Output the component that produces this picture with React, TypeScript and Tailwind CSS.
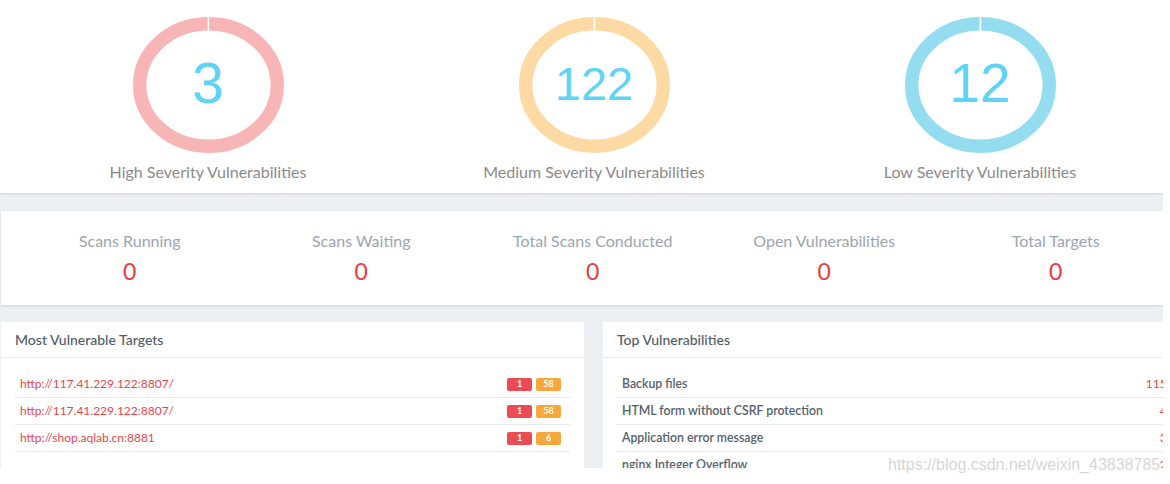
const severity = [
  { label: "High Severity Vulnerabilities", value: "3", ring: "#f8b5b5", size: "text-[57px]" },
  { label: "Medium Severity Vulnerabilities", value: "122", ring: "#fdd9a4", size: "text-[47px]" },
  { label: "Low Severity Vulnerabilities", value: "12", ring: "#94ddf1", size: "text-[55px]" },
];

const stats = ["Scans Running", "Scans Waiting", "Total Scans Conducted", "Open Vulnerabilities", "Total Targets"];

const targets = [
  { url: "http://117.41.229.122:8807/", high: 1, med: 58 },
  { url: "http://117.41.229.122:8807/", high: 1, med: 58 },
  { url: "http://shop.aqlab.cn:8881", high: 1, med: 6 },
];

const topVulns = [
  { name: "Backup files", count: 115 },
  { name: "HTML form without CSRF protection", count: 4 },
  { name: "Application error message", count: 3 },
  { name: "nginx Integer Overflow", count: 2 },
];

function Ring({ color }: { color: string }) {
  return (
    <svg width="151" height="136" viewBox="0 0 151 136" className="col-start-1 row-start-1">
      <ellipse cx="75.5" cy="68" rx="68.8" ry="61.3" fill="none" stroke={color} strokeWidth="13.4" />
      <rect x="74.6" y="0" width="1.6" height="16" fill="#ffffff" />
    </svg>
  );
}

export default function App() {
  return (
    <div className="relative w-[1170px] h-[484px] bg-white overflow-hidden font-['Lato',sans-serif]">
      <div className="w-[1163px] h-[468px] overflow-hidden bg-[#edf0f2]">
        <div className="w-[1200px]">
          {/* severity donuts */}
          <section className="flex h-[193px] bg-white pl-[15px] shadow-[0_1px_2px_rgba(0,0,0,0.12)]">
            {severity.map((s) => (
              <div key={s.label} className="flex w-[386px] flex-col items-center pt-[17px]">
                <div className="grid place-items-center">
                  <Ring color={s.ring} />
                  <span className={`col-start-1 row-start-1 -mt-[3px] font-['Liberation_Sans',sans-serif] leading-none text-[#5fd4f6] ${s.size}`}>
                    {s.value}
                  </span>
                </div>
                <div className="mt-[10px] text-[16px] leading-[18px] text-[#8a8a8a]">{s.label}</div>
              </div>
            ))}
          </section>

          {/* scan counters */}
          <section className="mt-[18px] ml-[1px] flex h-[94px] bg-white pl-[13px] shadow-[0_1px_2px_rgba(0,0,0,0.12)]">
            {stats.map((s) => (
              <div key={s} className="flex w-[231.5px] flex-col items-center pt-[21px]">
                <div className="text-[16px] leading-[18px] text-[#9ba5ae]">{s}</div>
                <div className="mt-[8px] text-[23px] leading-[26px] text-[#ec3a3e]">0</div>
              </div>
            ))}
          </section>

          <div className="mt-[17px] ml-[1px] flex gap-[19px]">
            {/* most vulnerable targets */}
            <section className="h-[200px] w-[583px] bg-white">
              <div className="flex h-[36px] items-center border-b border-[#e6eaed] px-[14px] text-[14px] font-medium text-[#4f5b66]">
                Most Vulnerable Targets
              </div>
              <div className="px-[14px] pt-[13px]">
                {targets.map((t, i) => (
                  <div key={i} className="flex h-[27px] items-center justify-between border-b border-[#e6eaed] pl-[5px] pr-[9px]">
                    <span className="text-[12px] text-[#e8454a]">{t.url}</span>
                    <div className="flex gap-[4px]">
                      <span className="flex h-[13px] w-[25px] items-center justify-center rounded-[2px] bg-[#eb4b53] text-[9px] font-bold text-white">
                        {t.high}
                      </span>
                      <span className="flex h-[13px] w-[25px] items-center justify-center rounded-[2px] bg-[#f7a83b] text-[9px] font-bold text-white">
                        {t.med}
                      </span>
                    </div>
                  </div>
                ))}
              </div>
            </section>

            {/* top vulnerabilities */}
            <section className="h-[200px] w-[590px] bg-white">
              <div className="flex h-[36px] items-center border-b border-[#e6eaed] px-[14px] text-[14px] font-medium text-[#4f5b66]">
                Top Vulnerabilities
              </div>
              <div className="pl-[13px] pr-[14px] pt-[13px]">
                {topVulns.map((v) => (
                  <div key={v.name} className="flex h-[27px] items-center justify-between border-b border-[#e6eaed] pl-[6px] pr-[12px]">
                    <span className="text-[12.3px] font-semibold text-[#56616b]">{v.name}</span>
                    <span className="text-[12.3px] text-[#e8454a]">{v.count}</span>
                  </div>
                ))}
              </div>
            </section>
          </div>
        </div>
      </div>

      <div className="absolute left-[888px] top-[455px] font-['Liberation_Sans',sans-serif] text-[16px] leading-[20px] text-[#d6d6d6]">
        https://blog.csdn.net/weixin_43838785
      </div>
    </div>
  );
}
